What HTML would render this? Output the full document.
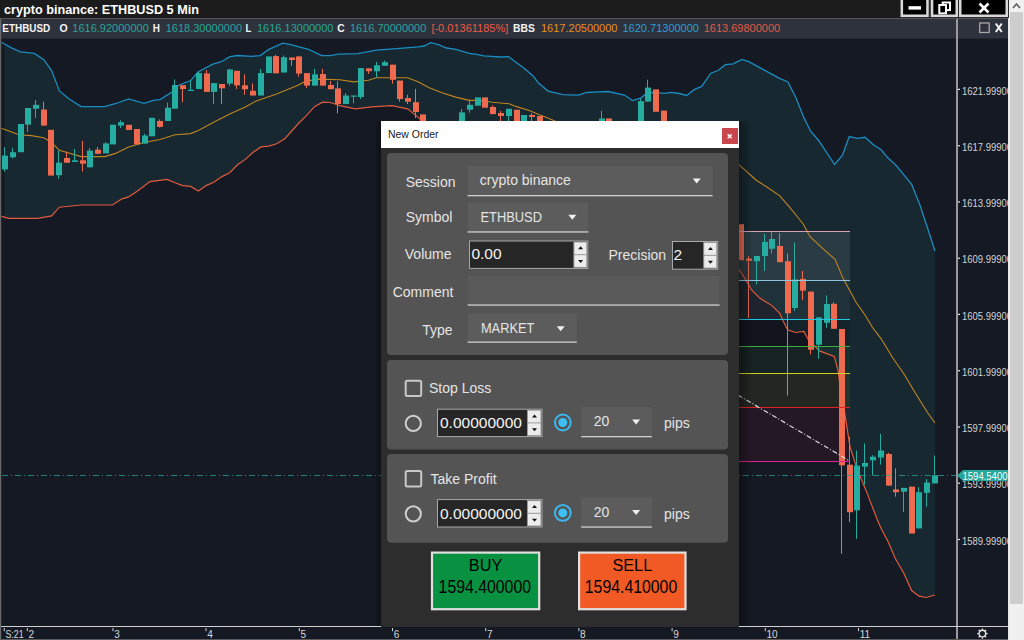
<!DOCTYPE html>
<html><head><meta charset="utf-8"><title>New Order</title>
<style>
*{margin:0;padding:0}
html,body{width:1024px;height:640px;overflow:hidden;background:#151923;font-family:"Liberation Sans",sans-serif}
svg text{white-space:pre}
</style></head><body>
<svg style="position:absolute;left:0;top:0" width="1024" height="640" viewBox="0 0 1024 640" font-family="Liberation Sans">
<rect x="0" y="0" width="1024" height="640" fill="#151923"/>
<defs><clipPath id="cc"><rect x="1.2" y="38" width="955.8" height="588"/></clipPath><clipPath id="pc"><rect x="958" y="38" width="50" height="588"/></clipPath><linearGradient id="sh" x1="0" x2="1" y1="0" y2="0"><stop offset="0" stop-color="#000" stop-opacity="0.35"/><stop offset="1" stop-color="#000" stop-opacity="0"/></linearGradient><linearGradient id="shl" x1="1" x2="0" y1="0" y2="0"><stop offset="0" stop-color="#000" stop-opacity="0.3"/><stop offset="1" stop-color="#000" stop-opacity="0"/></linearGradient></defs>
<g clip-path="url(#cc)">
<polygon points="4.5,43.9 5.0,44.2 10.9,47.6 20.3,51.9 34.4,53.4 43.8,59.7 51.6,70.6 59.4,90.9 68.8,98.8 81.2,106.6 104.7,106.6 116.0,103.5 128.7,99.0 144.0,103.4 153.1,100.3 160.0,99.6 172.0,92.0 176.0,86.2 190.8,80.5 197.9,71.9 213.5,63.8 221.3,61.7 229.9,56.6 238.0,55.5 251.6,56.4 260.2,55.6 268.8,49.4 282.9,43.1 290.7,44.7 298.0,46.6 308.5,49.4 321.8,55.6 330.4,55.6 338.2,54.1 358.0,53.7 376.3,50.2 396.6,48.6 418.0,46.8 424.0,46.0 430.6,42.7 438.6,44.6 446.5,48.0 455.8,49.3 469.1,53.3 478.0,54.6 484.0,55.9 499.9,57.0 508.5,56.6 514.5,61.2 523.8,67.9 533.1,75.9 538.0,82.5 548.0,91.1 562.6,94.7 578.5,95.1 586.5,92.5 598.0,91.8 608.2,91.5 624.4,95.0 632.5,100.6 640.7,98.1 647.8,92.5 658.0,92.7 664.1,93.3 671.2,92.3 679.4,93.5 686.5,95.5 694.6,89.4 701.7,86.4 710.8,73.2 718.0,70.5 725.4,64.7 733.2,63.8 741.8,59.5 748.8,61.6 762.9,69.4 778.5,77.8 787.9,81.9 796.0,98.0 804.0,117.9 810.6,131.2 818.6,140.5 834.6,164.5 842.5,155.2 849.2,136.5 857.2,138.4 865.1,137.3 873.1,144.5 881.1,149.8 887.8,157.8 895.7,165.0 903.7,174.6 911.7,184.4 919.7,204.4 927.6,228.3 935.0,251.0 935.0,595.0 926.0,597.5 919.1,596.2 911.6,590.6 903.5,572.5 895.4,558.8 888.5,542.5 881.3,528.8 877.4,520.0 867.2,493.4 856.3,466.9 850.0,446.6 844.4,411.2 840.5,390.0 838.2,371.2 834.3,356.4 819.4,350.9 808.5,340.0 803.8,331.4 795.4,332.5 787.6,329.8 782.9,320.5 779.8,313.4 771.9,305.6 759.4,297.8 751.6,290.0 748.5,284.4 738.8,268.8 700.0,240.0 600.0,200.0 500.0,170.0 440.0,150.0 420.0,118.9 407.6,108.8 391.9,105.6 371.6,106.9 355.4,108.8 339.8,105.6 330.4,102.5 322.6,102.2 314.8,106.4 305.4,116.6 298.0,124.0 292.2,130.5 284.4,139.1 276.6,143.8 268.8,146.1 260.9,146.9 253.1,152.3 245.3,159.4 237.5,164.8 229.7,172.7 221.9,176.6 214.1,182.0 206.2,185.6 198.4,191.1 190.6,186.4 182.8,185.6 175.0,182.8 167.2,179.4 150.0,181.6 137.5,190.9 128.1,197.2 121.9,198.8 112.5,205.0 81.2,205.0 59.4,207.2 51.6,215.9 37.5,218.4 12.5,218.4 9.0,218.4 5.0,217.3 4.5,217.2" fill="#172830"/>
<rect x="600" y="231.5" width="250" height="49.0" fill="rgba(150,160,170,0.16)"/>
<rect x="600" y="280.5" width="250" height="39.0" fill="rgba(120,140,160,0.09)"/>
<rect x="600" y="319.5" width="250" height="27.0" fill="rgba(0,0,0,0.12)"/>
<rect x="600" y="346.5" width="250" height="27.0" fill="rgba(40,140,40,0.08)"/>
<rect x="600" y="373.5" width="250" height="34.0" fill="rgba(190,180,20,0.09)"/>
<rect x="600" y="407.5" width="250" height="54.0" fill="rgba(190,20,50,0.09)"/>
<polyline points="1.3,42.2 5.0,44.2 10.9,47.6 20.3,51.9 34.4,53.4 43.8,59.7 51.6,70.6 59.4,90.9 68.8,98.8 81.2,106.6 104.7,106.6 116.0,103.5 128.7,99.0 144.0,103.4 153.1,100.3 160.0,99.6 172.0,92.0 176.0,86.2 190.8,80.5 197.9,71.9 213.5,63.8 221.3,61.7 229.9,56.6 238.0,55.5 251.6,56.4 260.2,55.6 268.8,49.4 282.9,43.1 290.7,44.7 298.0,46.6 308.5,49.4 321.8,55.6 330.4,55.6 338.2,54.1 358.0,53.7 376.3,50.2 396.6,48.6 418.0,46.8 424.0,46.0 430.6,42.7 438.6,44.6 446.5,48.0 455.8,49.3 469.1,53.3 478.0,54.6 484.0,55.9 499.9,57.0 508.5,56.6 514.5,61.2 523.8,67.9 533.1,75.9 538.0,82.5 548.0,91.1 562.6,94.7 578.5,95.1 586.5,92.5 598.0,91.8 608.2,91.5 624.4,95.0 632.5,100.6 640.7,98.1 647.8,92.5 658.0,92.7 664.1,93.3 671.2,92.3 679.4,93.5 686.5,95.5 694.6,89.4 701.7,86.4 710.8,73.2 718.0,70.5 725.4,64.7 733.2,63.8 741.8,59.5 748.8,61.6 762.9,69.4 778.5,77.8 787.9,81.9 796.0,98.0 804.0,117.9 810.6,131.2 818.6,140.5 834.6,164.5 842.5,155.2 849.2,136.5 857.2,138.4 865.1,137.3 873.1,144.5 881.1,149.8 887.8,157.8 895.7,165.0 903.7,174.6 911.7,184.4 919.7,204.4 927.6,228.3 935.0,251.0" fill="none" stroke="#1a8cc0" stroke-width="1.3"/>
<polyline points="1.5,128.5 5.0,129.6 18.8,134.7 31.2,135.6 43.8,137.8 51.6,142.5 59.4,150.3 81.2,156.6 104.7,156.6 115.6,153.4 128.1,147.2 143.8,142.5 160.0,139.5 175.0,134.7 190.6,133.6 198.4,130.5 214.1,121.9 229.7,114.1 245.3,107.0 256.3,100.9 276.6,93.9 298.0,85.3 305.4,81.4 317.9,79.1 339.8,79.8 353.8,81.9 368.5,80.3 376.3,77.8 407.6,77.8 418.0,81.7 429.3,87.8 442.6,93.1 455.8,97.1 469.1,100.4 480.0,100.4 491.9,102.2 509.2,103.8 515.8,106.4 529.1,110.4 540.0,115.0 546.6,117.5 556.0,121.5 600.0,128.0 700.0,150.0 738.8,164.5 756.3,180.2 767.2,187.2 779.8,195.8 789.1,206.7 800.0,220.0 803.8,225.0 810.1,236.7 822.6,248.4 835.1,259.4 842.9,278.1 856.2,302.5 865.0,315.0 872.5,327.5 881.2,338.8 892.5,357.5 903.8,373.8 915.0,392.5 927.5,412.5 935.0,423.0" fill="none" stroke="#c08520" stroke-width="1.1"/>
<polyline points="1.3,216.2 5.0,217.3 9.0,218.4 12.5,218.4 37.5,218.4 51.6,215.9 59.4,207.2 81.2,205.0 112.5,205.0 121.9,198.8 128.1,197.2 137.5,190.9 150.0,181.6 167.2,179.4 175.0,182.8 182.8,185.6 190.6,186.4 198.4,191.1 206.2,185.6 214.1,182.0 221.9,176.6 229.7,172.7 237.5,164.8 245.3,159.4 253.1,152.3 260.9,146.9 268.8,146.1 276.6,143.8 284.4,139.1 292.2,130.5 298.0,124.0 305.4,116.6 314.8,106.4 322.6,102.2 330.4,102.5 339.8,105.6 355.4,108.8 371.6,106.9 391.9,105.6 407.6,108.8 420.0,118.9 440.0,150.0 500.0,170.0 600.0,200.0 700.0,240.0 738.8,268.8 748.5,284.4 751.6,290.0 759.4,297.8 771.9,305.6 779.8,313.4 782.9,320.5 787.6,329.8 795.4,332.5 803.8,331.4 808.5,340.0 819.4,350.9 834.3,356.4 838.2,371.2 840.5,390.0 844.4,411.2 850.0,446.6 856.3,466.9 867.2,493.4 877.4,520.0 881.3,528.8 888.5,542.5 895.4,558.8 903.5,572.5 911.6,590.6 919.1,596.2 926.0,597.5 935.0,595.0" fill="none" stroke="#e05a3c" stroke-width="1.2"/>
<rect x="4" y="147.0" width="1" height="24.6" fill="#24ada0"/>
<rect x="2" y="155.6" width="6" height="13.8" fill="#24ada0"/>
<rect x="12" y="147.8" width="1" height="10.6" fill="#24ada0"/>
<rect x="10" y="152.2" width="6" height="5.0" fill="#24ada0"/>
<rect x="18" y="124.0" width="6" height="28.2" fill="#24ada0"/>
<rect x="27" y="108.0" width="1" height="23.9" fill="#24ada0"/>
<rect x="25" y="108.0" width="6" height="16.7" fill="#24ada0"/>
<rect x="35" y="100.0" width="1" height="17.8" fill="#24ada0"/>
<rect x="33" y="104.8" width="6" height="4.0" fill="#24ada0"/>
<rect x="43" y="101.7" width="1" height="23.9" fill="#ee6b50"/>
<rect x="41" y="109.5" width="6" height="16.1" fill="#ee6b50"/>
<rect x="48" y="129.8" width="6" height="45.8" fill="#ee6b50"/>
<rect x="58" y="150.6" width="1" height="28.2" fill="#24ada0"/>
<rect x="56" y="162.7" width="6" height="12.5" fill="#24ada0"/>
<rect x="66" y="151.7" width="1" height="11.0" fill="#ee6b50"/>
<rect x="64" y="158.0" width="6" height="4.7" fill="#ee6b50"/>
<rect x="74" y="149.0" width="1" height="12.9" fill="#24ada0"/>
<rect x="72" y="160.3" width="6" height="1.6" fill="#24ada0"/>
<rect x="82" y="140.8" width="1" height="30.8" fill="#ee6b50"/>
<rect x="80" y="160.3" width="6" height="3.4" fill="#ee6b50"/>
<rect x="89" y="148.0" width="1" height="19.3" fill="#24ada0"/>
<rect x="87" y="150.6" width="6" height="16.7" fill="#24ada0"/>
<rect x="97" y="147.0" width="1" height="6.8" fill="#ee6b50"/>
<rect x="95" y="149.7" width="6" height="4.1" fill="#ee6b50"/>
<rect x="105" y="142.3" width="1" height="11.0" fill="#24ada0"/>
<rect x="103" y="143.4" width="6" height="9.9" fill="#24ada0"/>
<rect x="110" y="124.7" width="6" height="19.7" fill="#24ada0"/>
<rect x="120" y="120.2" width="1" height="7.8" fill="#24ada0"/>
<rect x="118" y="122.2" width="6" height="3.4" fill="#24ada0"/>
<rect x="126" y="124.8" width="6" height="5.2" fill="#ee6b50"/>
<rect x="134" y="129.0" width="6" height="15.4" fill="#ee6b50"/>
<rect x="144" y="133.8" width="1" height="9.8" fill="#24ada0"/>
<rect x="142" y="135.5" width="6" height="8.1" fill="#24ada0"/>
<rect x="149" y="117.8" width="6" height="18.5" fill="#24ada0"/>
<rect x="159" y="119.4" width="1" height="8.1" fill="#ee6b50"/>
<rect x="157" y="121.0" width="6" height="5.9" fill="#ee6b50"/>
<rect x="167" y="102.5" width="1" height="18.5" fill="#24ada0"/>
<rect x="165" y="107.7" width="6" height="13.3" fill="#24ada0"/>
<rect x="174" y="79.5" width="1" height="29.2" fill="#24ada0"/>
<rect x="172" y="85.0" width="6" height="23.7" fill="#24ada0"/>
<rect x="182" y="85.2" width="1" height="17.1" fill="#ee6b50"/>
<rect x="180" y="85.2" width="6" height="3.8" fill="#ee6b50"/>
<rect x="190" y="80.5" width="1" height="10.5" fill="#24ada0"/>
<rect x="188" y="89.8" width="6" height="1.2" fill="#24ada0"/>
<rect x="198" y="71.9" width="1" height="17.1" fill="#24ada0"/>
<rect x="196" y="73.1" width="6" height="15.9" fill="#24ada0"/>
<rect x="206" y="70.0" width="1" height="21.9" fill="#ee6b50"/>
<rect x="204" y="73.4" width="6" height="18.5" fill="#ee6b50"/>
<rect x="213" y="83.1" width="1" height="20.8" fill="#24ada0"/>
<rect x="211" y="83.1" width="6" height="8.8" fill="#24ada0"/>
<rect x="221" y="84.0" width="1" height="19.9" fill="#ee6b50"/>
<rect x="219" y="84.0" width="6" height="4.3" fill="#ee6b50"/>
<rect x="229" y="68.8" width="1" height="17.2" fill="#24ada0"/>
<rect x="227" y="69.5" width="6" height="14.1" fill="#24ada0"/>
<rect x="236" y="70.8" width="1" height="18.2" fill="#ee6b50"/>
<rect x="234" y="70.8" width="6" height="14.6" fill="#ee6b50"/>
<rect x="244" y="74.4" width="1" height="20.3" fill="#ee6b50"/>
<rect x="242" y="85.3" width="6" height="3.9" fill="#ee6b50"/>
<rect x="252" y="83.4" width="1" height="12.1" fill="#ee6b50"/>
<rect x="250" y="90.8" width="6" height="4.7" fill="#ee6b50"/>
<rect x="260" y="68.9" width="1" height="26.6" fill="#24ada0"/>
<rect x="258" y="73.1" width="6" height="22.4" fill="#24ada0"/>
<rect x="266" y="56.4" width="6" height="16.7" fill="#24ada0"/>
<rect x="275" y="54.8" width="1" height="18.5" fill="#ee6b50"/>
<rect x="273" y="56.1" width="6" height="17.2" fill="#ee6b50"/>
<rect x="283" y="55.6" width="1" height="16.9" fill="#24ada0"/>
<rect x="281" y="57.2" width="6" height="15.3" fill="#24ada0"/>
<rect x="291" y="57.5" width="1" height="8.3" fill="#ee6b50"/>
<rect x="289" y="57.5" width="6" height="2.5" fill="#ee6b50"/>
<rect x="298" y="56.4" width="1" height="20.3" fill="#ee6b50"/>
<rect x="296" y="56.4" width="6" height="17.2" fill="#ee6b50"/>
<rect x="306" y="73.1" width="1" height="15.0" fill="#ee6b50"/>
<rect x="304" y="73.1" width="6" height="12.5" fill="#ee6b50"/>
<rect x="314" y="68.9" width="1" height="16.7" fill="#24ada0"/>
<rect x="312" y="74.4" width="6" height="11.2" fill="#24ada0"/>
<rect x="322" y="68.9" width="1" height="16.7" fill="#ee6b50"/>
<rect x="320" y="74.0" width="6" height="11.6" fill="#ee6b50"/>
<rect x="330" y="80.9" width="1" height="8.3" fill="#ee6b50"/>
<rect x="328" y="85.0" width="6" height="4.2" fill="#ee6b50"/>
<rect x="337" y="81.4" width="1" height="32.0" fill="#ee6b50"/>
<rect x="335" y="88.4" width="6" height="15.6" fill="#ee6b50"/>
<rect x="345" y="93.1" width="1" height="10.9" fill="#24ada0"/>
<rect x="343" y="95.5" width="6" height="8.5" fill="#24ada0"/>
<rect x="353" y="95.5" width="1" height="7.8" fill="#24ada0"/>
<rect x="351" y="95.5" width="6" height="1.2" fill="#24ada0"/>
<rect x="360" y="68.1" width="1" height="30.9" fill="#24ada0"/>
<rect x="358" y="68.1" width="6" height="28.9" fill="#24ada0"/>
<rect x="368" y="68.4" width="1" height="5.6" fill="#ee6b50"/>
<rect x="366" y="68.4" width="6" height="2.8" fill="#ee6b50"/>
<rect x="376" y="61.9" width="1" height="15.6" fill="#24ada0"/>
<rect x="374" y="65.3" width="6" height="6.0" fill="#24ada0"/>
<rect x="384" y="60.6" width="1" height="5.2" fill="#24ada0"/>
<rect x="382" y="62.2" width="6" height="3.6" fill="#24ada0"/>
<rect x="392" y="64.7" width="1" height="19.0" fill="#ee6b50"/>
<rect x="390" y="64.7" width="6" height="15.1" fill="#ee6b50"/>
<rect x="399" y="80.6" width="1" height="21.1" fill="#ee6b50"/>
<rect x="397" y="80.6" width="6" height="18.4" fill="#ee6b50"/>
<rect x="407" y="94.7" width="1" height="9.3" fill="#ee6b50"/>
<rect x="405" y="98.1" width="6" height="3.6" fill="#ee6b50"/>
<rect x="415" y="88.8" width="1" height="29.2" fill="#ee6b50"/>
<rect x="413" y="102.2" width="6" height="9.8" fill="#ee6b50"/>
<rect x="420" y="114.4" width="6" height="25.6" fill="#ee6b50"/>
<rect x="461" y="109.0" width="1" height="31.0" fill="#24ada0"/>
<rect x="459" y="112.4" width="6" height="27.6" fill="#24ada0"/>
<rect x="469" y="99.8" width="1" height="13.0" fill="#24ada0"/>
<rect x="467" y="104.8" width="6" height="4.9" fill="#24ada0"/>
<rect x="475" y="97.4" width="6" height="8.3" fill="#24ada0"/>
<rect x="482" y="97.4" width="6" height="10.3" fill="#ee6b50"/>
<rect x="492" y="105.3" width="1" height="8.8" fill="#ee6b50"/>
<rect x="490" y="107.0" width="6" height="7.1" fill="#ee6b50"/>
<rect x="500" y="111.0" width="1" height="29.0" fill="#ee6b50"/>
<rect x="498" y="113.0" width="6" height="3.0" fill="#ee6b50"/>
<rect x="508" y="108.8" width="1" height="31.2" fill="#24ada0"/>
<rect x="506" y="108.8" width="6" height="7.2" fill="#24ada0"/>
<rect x="514" y="109.7" width="6" height="30.3" fill="#ee6b50"/>
<rect x="521" y="115.0" width="6" height="25.0" fill="#24ada0"/>
<rect x="531" y="113.3" width="1" height="26.7" fill="#ee6b50"/>
<rect x="529" y="115.0" width="6" height="2.0" fill="#ee6b50"/>
<rect x="537" y="116.0" width="6" height="24.0" fill="#ee6b50"/>
<rect x="601" y="110.8" width="1" height="29.2" fill="#24ada0"/>
<rect x="599" y="118.4" width="6" height="21.6" fill="#24ada0"/>
<rect x="606" y="118.4" width="6" height="21.6" fill="#ee6b50"/>
<rect x="640" y="98.0" width="1" height="42.0" fill="#24ada0"/>
<rect x="638" y="101.1" width="6" height="38.9" fill="#24ada0"/>
<rect x="647" y="79.8" width="1" height="21.8" fill="#24ada0"/>
<rect x="645" y="87.6" width="6" height="14.0" fill="#24ada0"/>
<rect x="653" y="89.4" width="6" height="22.4" fill="#ee6b50"/>
<rect x="661" y="110.6" width="6" height="29.4" fill="#ee6b50"/>
<rect x="738" y="224.2" width="6" height="36.0" fill="#ee6b50"/>
<rect x="748" y="256.2" width="1" height="61.9" fill="#ee6b50"/>
<rect x="746" y="258.6" width="6" height="2.0" fill="#ee6b50"/>
<rect x="756" y="256.0" width="1" height="28.4" fill="#24ada0"/>
<rect x="754" y="256.0" width="6" height="5.2" fill="#24ada0"/>
<rect x="764" y="234.0" width="1" height="37.0" fill="#24ada0"/>
<rect x="762" y="241.9" width="6" height="14.1" fill="#24ada0"/>
<rect x="771" y="232.0" width="1" height="21.4" fill="#24ada0"/>
<rect x="769" y="239.0" width="6" height="9.8" fill="#24ada0"/>
<rect x="779" y="233.1" width="1" height="29.1" fill="#ee6b50"/>
<rect x="777" y="246.0" width="6" height="16.2" fill="#ee6b50"/>
<rect x="787" y="253.4" width="1" height="142.2" fill="#ee6b50"/>
<rect x="785" y="261.2" width="6" height="52.1" fill="#ee6b50"/>
<rect x="794" y="242.5" width="1" height="68.5" fill="#24ada0"/>
<rect x="792" y="279.4" width="6" height="28.6" fill="#24ada0"/>
<rect x="802" y="271.0" width="1" height="29.2" fill="#ee6b50"/>
<rect x="800" y="278.9" width="6" height="11.7" fill="#ee6b50"/>
<rect x="810" y="291.6" width="1" height="62.8" fill="#ee6b50"/>
<rect x="808" y="291.6" width="6" height="58.1" fill="#ee6b50"/>
<rect x="818" y="317.3" width="1" height="41.4" fill="#24ada0"/>
<rect x="816" y="317.3" width="6" height="27.4" fill="#24ada0"/>
<rect x="826" y="295.5" width="1" height="32.3" fill="#24ada0"/>
<rect x="824" y="304.0" width="6" height="18.8" fill="#24ada0"/>
<rect x="833" y="302.2" width="1" height="26.6" fill="#ee6b50"/>
<rect x="831" y="303.8" width="6" height="25.0" fill="#ee6b50"/>
<rect x="841" y="329.0" width="1" height="224.8" fill="#ee6b50"/>
<rect x="839" y="329.0" width="6" height="136.3" fill="#ee6b50"/>
<rect x="849" y="436.9" width="1" height="85.3" fill="#ee6b50"/>
<rect x="847" y="464.7" width="6" height="47.5" fill="#ee6b50"/>
<rect x="856" y="450.5" width="1" height="88.4" fill="#24ada0"/>
<rect x="854" y="465.6" width="6" height="44.7" fill="#24ada0"/>
<rect x="864" y="443.4" width="1" height="41.4" fill="#24ada0"/>
<rect x="862" y="463.0" width="6" height="3.6" fill="#24ada0"/>
<rect x="872" y="455.2" width="1" height="20.3" fill="#24ada0"/>
<rect x="870" y="456.7" width="6" height="3.6" fill="#24ada0"/>
<rect x="880" y="433.8" width="1" height="30.8" fill="#24ada0"/>
<rect x="878" y="450.5" width="6" height="7.0" fill="#24ada0"/>
<rect x="888" y="452.8" width="1" height="32.8" fill="#ee6b50"/>
<rect x="886" y="454.0" width="6" height="31.6" fill="#ee6b50"/>
<rect x="895" y="468.4" width="1" height="28.2" fill="#ee6b50"/>
<rect x="893" y="489.5" width="6" height="2.7" fill="#ee6b50"/>
<rect x="903" y="487.9" width="1" height="24.1" fill="#24ada0"/>
<rect x="901" y="487.9" width="6" height="3.8" fill="#24ada0"/>
<rect x="909" y="486.6" width="6" height="46.9" fill="#ee6b50"/>
<rect x="918" y="487.2" width="1" height="41.2" fill="#24ada0"/>
<rect x="916" y="492.2" width="6" height="36.2" fill="#24ada0"/>
<rect x="926" y="479.1" width="1" height="27.6" fill="#24ada0"/>
<rect x="924" y="482.5" width="6" height="10.3" fill="#24ada0"/>
<rect x="934" y="455.6" width="1" height="27.8" fill="#24ada0"/>
<rect x="932" y="475.3" width="6" height="8.1" fill="#24ada0"/>
<line x1="600" y1="231.5" x2="850" y2="231.5" stroke="#d9a3b5" stroke-width="1"/>
<line x1="600" y1="280.5" x2="850" y2="280.5" stroke="#8fc3e0" stroke-width="1"/>
<line x1="600" y1="319.5" x2="850" y2="319.5" stroke="#1fc8e0" stroke-width="1"/>
<line x1="600" y1="346.5" x2="850" y2="346.5" stroke="#3db040" stroke-width="1"/>
<line x1="600" y1="373.5" x2="850" y2="373.5" stroke="#d0d020" stroke-width="1"/>
<line x1="600" y1="407.5" x2="850" y2="407.5" stroke="#e02424" stroke-width="1"/>
<line x1="600" y1="461.5" x2="850" y2="461.5" stroke="#e0209a" stroke-width="1"/>
<line x1="600" y1="313.7" x2="849" y2="460.5" stroke="#d8d8d8" stroke-width="1.2" stroke-dasharray="5,2,1,2"/>
<line x1="2" y1="475.5" x2="957" y2="475.5" stroke="#26a69a" stroke-opacity="0.75" stroke-width="1" stroke-dasharray="6,3,1,3"/>
</g>
<rect x="0" y="0" width="1009" height="18" fill="#1b1b1b"/>
<text x="4" y="13.7" font-size="13" fill="#fff" font-weight="bold" textLength="195" lengthAdjust="spacingAndGlyphs">crypto binance: ETHBUSD 5 Min</text>
<rect x="0" y="18" width="1009" height="1" fill="#555"/>
<rect x="0" y="19" width="1009" height="19.6" fill="#2e323d"/>
<text x="2.3" y="31.7" font-size="11" fill="#f4f4f4" font-weight="bold" textLength="48" lengthAdjust="spacingAndGlyphs">ETHBUSD</text>
<text x="59.6" y="31.7" font-size="11" fill="#f4f4f4" font-weight="bold" textLength="8.2" lengthAdjust="spacingAndGlyphs">O</text>
<text x="152.8" y="31.7" font-size="11" fill="#f4f4f4" font-weight="bold" textLength="7.2" lengthAdjust="spacingAndGlyphs">H</text>
<text x="245.5" y="31.7" font-size="11" fill="#f4f4f4" font-weight="bold" textLength="5.8" lengthAdjust="spacingAndGlyphs">L</text>
<text x="337.3" y="31.7" font-size="11" fill="#f4f4f4" font-weight="bold" textLength="7.4" lengthAdjust="spacingAndGlyphs">C</text>
<text x="513" y="31.7" font-size="11" fill="#f4f4f4" font-weight="bold" textLength="21.8" lengthAdjust="spacingAndGlyphs">BBS</text>
<text x="72.3" y="31.7" font-size="11" fill="#26a69a">1616.92000000</text>
<text x="165.7" y="31.7" font-size="11" fill="#26a69a">1618.30000000</text>
<text x="257" y="31.7" font-size="11" fill="#26a69a">1616.13000000</text>
<text x="349.9" y="31.7" font-size="11" fill="#26a69a">1616.70000000</text>
<text x="431.4" y="31.7" font-size="11" fill="#ef5a45">[-0.01361185%]</text>
<text x="541" y="31.7" font-size="11" fill="#e8901a">1617.20500000</text>
<text x="622.5" y="31.7" font-size="11" fill="#2a9fd8">1620.71300000</text>
<text x="703.7" y="31.7" font-size="11" fill="#e05a45">1613.69800000</text>
<rect x="979.7" y="23" width="9.5" height="9.5" fill="none" stroke="#a8a8a8" stroke-width="1.3"/>
<path d="M995.8,23.5 L1001.8,32 M1001.8,23.5 L995.8,32" stroke="#f4f4f4" stroke-width="2"/>
<rect x="0" y="19" width="1.2" height="621" fill="#6a6a6a"/>
<rect x="956" y="19" width="2" height="620" fill="#9a9a9a"/>
<g clip-path="url(#pc)">
<rect x="954.5" y="88.8" width="5.5" height="1.2" fill="#e8e8e8"/>
<text x="962" y="94.6" font-size="10" fill="#d4d4d4" textLength="50" lengthAdjust="spacingAndGlyphs">1621.99900</text>
<rect x="954.5" y="145.1" width="5.5" height="1.2" fill="#e8e8e8"/>
<text x="962" y="150.9" font-size="10" fill="#d4d4d4" textLength="50" lengthAdjust="spacingAndGlyphs">1617.99900</text>
<rect x="954.5" y="201.3" width="5.5" height="1.2" fill="#e8e8e8"/>
<text x="962" y="207.1" font-size="10" fill="#d4d4d4" textLength="50" lengthAdjust="spacingAndGlyphs">1613.99900</text>
<rect x="954.5" y="257.6" width="5.5" height="1.2" fill="#e8e8e8"/>
<text x="962" y="263.4" font-size="10" fill="#d4d4d4" textLength="50" lengthAdjust="spacingAndGlyphs">1609.99900</text>
<rect x="954.5" y="313.8" width="5.5" height="1.2" fill="#e8e8e8"/>
<text x="962" y="319.6" font-size="10" fill="#d4d4d4" textLength="50" lengthAdjust="spacingAndGlyphs">1605.99900</text>
<rect x="954.5" y="370.1" width="5.5" height="1.2" fill="#e8e8e8"/>
<text x="962" y="375.9" font-size="10" fill="#d4d4d4" textLength="50" lengthAdjust="spacingAndGlyphs">1601.99900</text>
<rect x="954.5" y="426.4" width="5.5" height="1.2" fill="#e8e8e8"/>
<text x="962" y="432.2" font-size="10" fill="#d4d4d4" textLength="50" lengthAdjust="spacingAndGlyphs">1597.99900</text>
<rect x="954.5" y="482.6" width="5.5" height="1.2" fill="#e8e8e8"/>
<text x="962" y="488.4" font-size="10" fill="#d4d4d4" textLength="50" lengthAdjust="spacingAndGlyphs">1593.99900</text>
<rect x="954.5" y="538.9" width="5.5" height="1.2" fill="#e8e8e8"/>
<text x="962" y="544.7" font-size="10" fill="#d4d4d4" textLength="50" lengthAdjust="spacingAndGlyphs">1589.99900</text>
</g>
<path d="M957,475.5 L963,470 L1008,470 L1008,481 L963,481 Z" fill="#26a69a"/>
<text x="962.5" y="480" font-size="10.5" fill="#fff" textLength="45" lengthAdjust="spacingAndGlyphs">1594.5400</text>
<rect x="1.2" y="626" width="1006.8" height="1" fill="#d0d0d0"/>
<rect x="3.8" y="628" width="1" height="3.2" fill="#d0d0d0"/>
<text x="5.5" y="638" font-size="10" fill="#d8d8d8" textLength="18" lengthAdjust="spacingAndGlyphs">S:21</text>
<rect x="26.8" y="628" width="1" height="3.2" fill="#d0d0d0"/>
<text x="28.5" y="638" font-size="10" fill="#d8d8d8">2</text>
<rect x="112.5" y="628" width="1" height="3.2" fill="#d0d0d0"/>
<text x="114.2" y="638" font-size="10" fill="#d8d8d8">3</text>
<rect x="205.5" y="628" width="1" height="3.2" fill="#d0d0d0"/>
<text x="207.2" y="638" font-size="10" fill="#d8d8d8">4</text>
<rect x="298.8" y="628" width="1" height="3.2" fill="#d0d0d0"/>
<text x="300.5" y="638" font-size="10" fill="#d8d8d8">5</text>
<rect x="392.0" y="628" width="1" height="3.2" fill="#d0d0d0"/>
<text x="393.7" y="638" font-size="10" fill="#d8d8d8">6</text>
<rect x="485.2" y="628" width="1" height="3.2" fill="#d0d0d0"/>
<text x="486.9" y="638" font-size="10" fill="#d8d8d8">7</text>
<rect x="578.4" y="628" width="1" height="3.2" fill="#d0d0d0"/>
<text x="580.1" y="638" font-size="10" fill="#d8d8d8">8</text>
<rect x="671.6" y="628" width="1" height="3.2" fill="#d0d0d0"/>
<text x="673.3000000000001" y="638" font-size="10" fill="#d8d8d8">9</text>
<rect x="764.8" y="628" width="1" height="3.2" fill="#d0d0d0"/>
<text x="766.5" y="638" font-size="10" fill="#d8d8d8">10</text>
<rect x="858.0" y="628" width="1" height="3.2" fill="#d0d0d0"/>
<text x="859.7" y="638" font-size="10" fill="#d8d8d8">11</text>
<rect x="0" y="639" width="1009" height="1" fill="#5a5a5a"/>
<g transform="translate(982.4,633.6)" fill="none" stroke="#e0e0e0"><circle r="3.3" stroke-width="1.4"/><path d="M0,-5.2V-3.6M0,5.2V3.6M-5.2,0H-3.6M5.2,0H3.6M-3.7,-3.7L-2.6,-2.6M3.7,3.7L2.6,2.6M-3.7,3.7L-2.6,2.6M3.7,-3.7L2.6,-2.6" stroke-width="1.3"/></g>
<rect x="1008" y="0" width="1" height="640" fill="#e8e8e8"/>
<rect x="1009" y="0" width="15" height="640" fill="#f0f0f0"/>
<rect x="1010" y="12" width="13" height="592" fill="#cdcdcd"/>
<path d="M1013,8 L1016.5,4 L1020,8" fill="none" stroke="#606060" stroke-width="1.6"/>
<rect x="900" y="0" width="109" height="18" fill="#2a2a2a"/>
<rect x="900.6" y="0" width="28.1" height="17" fill="#d8d8d8"/>
<rect x="903.1" y="0" width="23.1" height="14.5" fill="#000"/>
<rect x="930.8" y="0" width="27.2" height="17" fill="#d8d8d8"/>
<rect x="933.3" y="0" width="22.2" height="14.5" fill="#000"/>
<rect x="959" y="0" width="49.0" height="17" fill="#d8d8d8"/>
<rect x="961.5" y="0" width="44.0" height="14.5" fill="#000"/>
<rect x="908.5" y="6.2" width="12.5" height="3.4" fill="#fff"/>
<rect x="942.7" y="2.5" width="7.3" height="7.6" fill="none" stroke="#fff" stroke-width="2"/>
<rect x="938.3" y="4" width="8.7" height="10.4" fill="#000"/>
<rect x="939.3" y="5" width="6.7" height="8.4" fill="none" stroke="#fff" stroke-width="2"/>
<path d="M979.5,3.5 L988.5,12.5 M988.5,3.5 L979.5,12.5" stroke="#fff" stroke-width="2.6"/>
<rect x="739" y="121" width="14" height="505" fill="url(#sh)"/>
<rect x="373" y="121" width="8" height="505" fill="url(#shl)"/>
<rect x="381" y="121" width="358" height="506" fill="#2d2d2d"/>
<rect x="381" y="121" width="358" height="27" fill="#fff"/>
<text x="388" y="137.8" font-size="11" fill="#1a1a1a" textLength="50.5" lengthAdjust="spacingAndGlyphs">New Order</text>
<rect x="722" y="128" width="16" height="16" fill="#c9474c"/>
<path d="M727.7,134.2 L731.7,138.2 M731.7,134.2 L727.7,138.2" stroke="#fff" stroke-width="1.4"/>
<rect x="387" y="153" width="341" height="202" rx="4" fill="#545454"/>
<rect x="387" y="360" width="341" height="89.5" rx="4" fill="#545454"/>
<rect x="387" y="454" width="341" height="88.7" rx="4" fill="#545454"/>
<text x="405.7" y="186.6" font-size="14" fill="#e4e4e4">Session</text>
<rect x="467.6" y="166" width="245.0" height="29.6" fill="#5c5c5c"/><rect x="467.6" y="195.0" width="245.0" height="1.3" fill="#cfcfcf"/><path d="M692.7,178.5 L700.7,178.5 L696.7,183.5 Z" fill="#f0f0f0"/>
<text x="479.8" y="184.7" font-size="14" fill="#e4e4e4">crypto binance</text>
<text x="405.7" y="222.2" font-size="14" fill="#e4e4e4">Symbol</text>
<rect x="467.6" y="202.5" width="120.8" height="29.4" fill="#5c5c5c"/><rect x="467.6" y="231.3" width="120.8" height="1.3" fill="#cfcfcf"/><path d="M568.3,214.7 L576.3,214.7 L572.3,219.7 Z" fill="#f0f0f0"/>
<text x="480.5" y="222" font-size="14" fill="#e4e4e4" textLength="61.5" lengthAdjust="spacingAndGlyphs">ETHBUSD</text>
<text x="404.8" y="258.8" font-size="14" fill="#e4e4e4">Volume</text>
<rect x="469.5" y="241" width="118.3" height="27.4" fill="#262626" stroke="#a8a8a8" stroke-width="1"/><rect x="573.4" y="241.5" width="13.9" height="26.4" fill="#9a9a9a"/><rect x="574.4" y="242.5" width="11.9" height="11.7" fill="#ececec"/><rect x="574.4" y="255.2" width="11.9" height="11.7" fill="#ececec"/><path d="M578.0999999999999,249.35 L583.0999999999999,249.35 L580.5999999999999,246.35 Z" fill="#111"/><path d="M578.0999999999999,260.04999999999995 L583.0999999999999,260.04999999999995 L580.5999999999999,263.04999999999995 Z" fill="#111"/>
<text x="471.4" y="259.2" font-size="15.5" fill="#f4f4f4">0.00</text>
<text x="608.5" y="260.4" font-size="14" fill="#e4e4e4">Precision</text>
<rect x="672.5" y="241.5" width="45.2" height="27.7" fill="#262626" stroke="#a8a8a8" stroke-width="1"/><rect x="703.2" y="242.0" width="14.0" height="26.7" fill="#9a9a9a"/><rect x="704.2" y="243.0" width="12.0" height="11.8" fill="#ececec"/><rect x="704.2" y="255.85" width="12.0" height="11.8" fill="#ececec"/><path d="M707.95,249.925 L712.95,249.925 L710.45,246.925 Z" fill="#111"/><path d="M707.95,260.775 L712.95,260.775 L710.45,263.775 Z" fill="#111"/>
<text x="673.6" y="259.8" font-size="15.5" fill="#f4f4f4">2</text>
<text x="392.7" y="296.9" font-size="14" fill="#e4e4e4">Comment</text>
<rect x="467.6" y="276" width="252" height="29" fill="#5a5a5a"/><rect x="467.6" y="304.4" width="252" height="1.3" fill="#cfcfcf"/>
<text x="422.3" y="334.5" font-size="14" fill="#e4e4e4">Type</text>
<rect x="467.6" y="313.7" width="109.2" height="28.4" fill="#5c5c5c"/><rect x="467.6" y="341.5" width="109.2" height="1.3" fill="#cfcfcf"/><path d="M556.7,326.3 L564.7,326.3 L560.7,331.3 Z" fill="#f0f0f0"/>
<text x="480.9" y="332.8" font-size="14" fill="#e4e4e4" textLength="53.5" lengthAdjust="spacingAndGlyphs">MARKET</text>
<rect x="405.7" y="380.7" width="15.5" height="15.3" rx="1.5" fill="none" stroke="#c8c8c8" stroke-width="2"/>
<text x="429" y="393.3" font-size="14" fill="#e4e4e4">Stop Loss</text>
<circle cx="413.3" cy="423.4" r="7.6" fill="none" stroke="#cfcfcf" stroke-width="2"/>
<rect x="437.5" y="409.2" width="104.5" height="27.4" fill="#262626" stroke="#a8a8a8" stroke-width="1"/><rect x="527" y="409.7" width="14.5" height="26.4" fill="#9a9a9a"/><rect x="528" y="410.7" width="12.5" height="11.7" fill="#ececec"/><rect x="528" y="423.4" width="12.5" height="11.7" fill="#ececec"/><path d="M532.0,417.54999999999995 L537.0,417.54999999999995 L534.5,414.54999999999995 Z" fill="#111"/><path d="M532.0,428.25 L537.0,428.25 L534.5,431.25 Z" fill="#111"/>
<text x="440" y="428.1" font-size="15.5" fill="#f4f4f4">0.00000000</text>
<circle cx="562.8" cy="422.5" r="7.9" fill="none" stroke="#3cb8f0" stroke-width="2"/>
<circle cx="562.8" cy="422.5" r="4.5" fill="#3cc0f5"/>
<rect x="581.2" y="407" width="70.7" height="29.6" fill="#5c5c5c"/><rect x="581.2" y="436.0" width="70.7" height="1.3" fill="#cfcfcf"/><path d="M632.1,419.5 L640.1,419.5 L636.1,424.5 Z" fill="#f0f0f0"/>
<text x="593.8" y="426.2" font-size="14" fill="#e4e4e4">20</text>
<text x="664" y="428.2" font-size="14" fill="#e4e4e4">pips</text>
<rect x="405.7" y="471.1" width="15.5" height="15.3" rx="1.5" fill="none" stroke="#c8c8c8" stroke-width="2"/>
<text x="430.5" y="483.7" font-size="14" fill="#e4e4e4">Take Profit</text>
<circle cx="413.3" cy="513.8" r="7.6" fill="none" stroke="#cfcfcf" stroke-width="2"/>
<rect x="437.5" y="499.6" width="104.5" height="27.4" fill="#262626" stroke="#a8a8a8" stroke-width="1"/><rect x="527" y="500.1" width="14.5" height="26.4" fill="#9a9a9a"/><rect x="528" y="501.1" width="12.5" height="11.7" fill="#ececec"/><rect x="528" y="513.8" width="12.5" height="11.7" fill="#ececec"/><path d="M532.0,507.95 L537.0,507.95 L534.5,504.95 Z" fill="#111"/><path d="M532.0,518.65 L537.0,518.65 L534.5,521.65 Z" fill="#111"/>
<text x="440" y="518.5" font-size="15.5" fill="#f4f4f4">0.00000000</text>
<circle cx="562.8" cy="512.9" r="7.9" fill="none" stroke="#3cb8f0" stroke-width="2"/>
<circle cx="562.8" cy="512.9" r="4.5" fill="#3cc0f5"/>
<rect x="581.2" y="497.4" width="70.7" height="29.6" fill="#5c5c5c"/><rect x="581.2" y="526.4" width="70.7" height="1.3" fill="#cfcfcf"/><path d="M632.1,509.9 L640.1,509.9 L636.1,514.9 Z" fill="#f0f0f0"/>
<text x="593.8" y="516.6" font-size="14" fill="#e4e4e4">20</text>
<text x="664" y="518.6" font-size="14" fill="#e4e4e4">pips</text>
<rect x="430.9" y="551.5" width="109.4" height="58.8" fill="#e0e0e0"/>
<rect x="433.1" y="553.7" width="105.0" height="54.4" fill="#079141"/>
<text x="485.6" y="571" font-size="16.3" fill="#000" text-anchor="middle">BUY</text>
<text x="438.6" y="592.7" font-size="17.8" fill="#000" textLength="92.4" lengthAdjust="spacingAndGlyphs">1594.400000</text>
<rect x="578" y="551.5" width="108.6" height="58.8" fill="#e0e0e0"/>
<rect x="580.2" y="553.7" width="104.2" height="54.4" fill="#f15a24"/>
<text x="632.3" y="571" font-size="16.3" fill="#000" text-anchor="middle">SELL</text>
<text x="584.8" y="592.7" font-size="17.8" fill="#000" textLength="92.4" lengthAdjust="spacingAndGlyphs">1594.410000</text>
</svg>
</body></html>
